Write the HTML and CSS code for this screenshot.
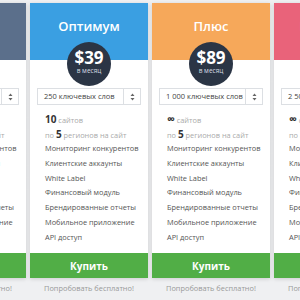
FILE: index.html
```html
<!DOCTYPE html>
<html lang="ru">
<head>
<meta charset="UTF-8">
<title>Тарифы</title>
<link rel="stylesheet" href="styles.css">
</head>
<body>
<div class="plans">
    <div class="plan">
        <div class="card gray">
            <div class="title">Базовый</div>
            <div class="price"><b>$19</b><span>в месяц</span></div>
            <div class="select"><span class="value">100 ключевых слов</span><span class="arrows"><svg width="5" height="8" viewBox="0 0 5 8"><path d="M2.5 0.5L4.5 3H0.5zM2.5 7.5L4.5 5H0.5z" fill="#666"/></svg></span></div>
            <ul class="features">
                <li><b>3</b> сайта</li>
                <li>по <b>5</b> регионов на сайт</li>
                <li class="on">Мониторинг конкурентов</li>
                <li class="on">Клиентские аккаунты</li>
                <li class="on">White Label</li>
                <li class="on">Финансовый модуль</li>
                <li class="on">Брендированные отчеты</li>
                <li class="on">Мобильное приложение</li>
                <li class="on">API доступ</li>
            </ul>
            <button class="buy">Купить</button>
        </div>
        <div class="trial">Попробовать бесплатно!</div>
    </div>

    <div class="plan">
        <div class="card blue">
            <div class="title">Оптимум</div>
            <div class="price"><b>$39</b><span>в месяц</span></div>
            <div class="select"><span class="value">250 ключевых слов</span><span class="arrows"><svg width="5" height="8" viewBox="0 0 5 8"><path d="M2.5 0.5L4.5 3H0.5zM2.5 7.5L4.5 5H0.5z" fill="#666"/></svg></span></div>
            <ul class="features">
                <li><b>10</b> сайтов</li>
                <li>по <b>5</b> регионов на сайт</li>
                <li class="on">Мониторинг конкурентов</li>
                <li class="on">Клиентские аккаунты</li>
                <li class="on">White Label</li>
                <li class="on">Финансовый модуль</li>
                <li class="on">Брендированные отчеты</li>
                <li class="on">Мобильное приложение</li>
                <li class="on">API доступ</li>
            </ul>
            <button class="buy">Купить</button>
        </div>
        <div class="trial">Попробовать бесплатно!</div>
    </div>

    <div class="plan">
        <div class="card orange">
            <div class="title">Плюс</div>
            <div class="price"><b>$89</b><span>в месяц</span></div>
            <div class="select"><span class="value">1 000 ключевых слов</span><span class="arrows"><svg width="5" height="8" viewBox="0 0 5 8"><path d="M2.5 0.5L4.5 3H0.5zM2.5 7.5L4.5 5H0.5z" fill="#666"/></svg></span></div>
            <ul class="features">
                <li><b class="inf">∞</b> сайтов</li>
                <li>по <b>5</b> регионов на сайт</li>
                <li class="on">Мониторинг конкурентов</li>
                <li class="on">Клиентские аккаунты</li>
                <li class="on">White Label</li>
                <li class="on">Финансовый модуль</li>
                <li class="on">Брендированные отчеты</li>
                <li class="on">Мобильное приложение</li>
                <li class="on">API доступ</li>
            </ul>
            <button class="buy">Купить</button>
        </div>
        <div class="trial">Попробовать бесплатно!</div>
    </div>

    <div class="plan">
        <div class="card pink">
            <div class="title">Компания</div>
            <div class="price"><b>$179</b><span>в месяц</span></div>
            <div class="select"><span class="value">2 500 ключевых слов</span><span class="arrows"><svg width="5" height="8" viewBox="0 0 5 8"><path d="M2.5 0.5L4.5 3H0.5zM2.5 7.5L4.5 5H0.5z" fill="#666"/></svg></span></div>
            <ul class="features">
                <li><b class="inf">∞</b> сайтов</li>
                <li>по <b>5</b> регионов на сайт</li>
                <li class="on">Мониторинг конкурентов</li>
                <li class="on">Клиентские аккаунты</li>
                <li class="on">White Label</li>
                <li class="on">Финансовый модуль</li>
                <li class="on">Брендированные отчеты</li>
                <li class="on">Мобильное приложение</li>
                <li class="on">API доступ</li>
            </ul>
            <button class="buy">Купить</button>
        </div>
        <div class="trial">Попробовать бесплатно!</div>
    </div>
</div>
</body>
</html>
```

FILE: styles.css
```css
body {
    margin: 0;
    width: 300px;
    height: 300px;
    overflow: hidden;
    font-family: "Open Sans", "Noto Sans", sans-serif;
    background:
        repeating-linear-gradient(90deg, rgba(255,255,255,0.035) 0 1px, transparent 1px 12px),
        repeating-linear-gradient(0deg, rgba(255,255,255,0.035) 0 1px, transparent 1px 12px),
        #252d3b;
    background-size: 100% 190px;
    background-repeat: no-repeat;
    background-color: #eff0f2;
}
.plans {
    display: flex;
    gap: 4px;
    margin-left: -92px;
    padding-top: 3px;
}
.plan {
    flex: 0 0 118px;
    display: flex;
    flex-direction: column;
}
.card {
    display: flex;
    flex-direction: column;
    background: #fff;
    box-shadow: 0 1px 4px rgba(0,0,0,0.15);
}
.card.gray   { background: linear-gradient(#5b6f8b 0 57px, #fff 57px); }
.card.blue   { background: linear-gradient(#3a9fe2 0 57px, #fff 57px); }
.card.orange { background: linear-gradient(#f6a85a 0 57px, #fff 57px); }
.card.pink   { background: linear-gradient(#e9637a 0 57px, #fff 57px); }
.title {
    margin-top: 15px;
    height: 16px;
    line-height: 16px;
    text-align: center;
    color: #fff;
    font-size: 13px;
    font-weight: 600;
}
.price {
    width: 44px;
    height: 44px;
    margin: 8px auto 0;
    border-radius: 50%;
    background: #2b3545;
    color: #fff;
    display: flex;
    flex-direction: column;
    align-items: center;
}
.price b {
    margin-top: 7px;
    font-size: 17px;
    line-height: 17px;
    font-weight: 700;
}
.price span {
    margin-top: 1px;
    font-size: 6.5px;
    line-height: 8px;
    color: #d5dae2;
}
.select {
    margin: 2px 7px 0;
    height: 17px;
    border: 1px solid #dcdfe3;
    box-sizing: border-box;
    display: flex;
    font-size: 7.5px;
    color: #444;
}
.select .value {
    flex: 1;
    padding-left: 6px;
    line-height: 15px;
}
.select .arrows {
    width: 16px;
    border-left: 1px solid #dcdfe3;
    display: flex;
    align-items: center;
    justify-content: center;
}
.features {
    list-style: none;
    margin: 7px 0 0;
    padding: 0 0 0 15px;
    font-size: 7.4px;
    line-height: 14.7px;
    color: #aaa;
}
.features li {
    height: 14.7px;
    white-space: nowrap;
}
.features b {
    color: #333;
    font-size: 10px;
    font-weight: 700;
}
.features b.inf {
    font-size: 11px;
}
.features li.on {
    color: #555;
}
.buy {
    margin-top: 9px;
    height: 25px;
    border: none;
    background: #51ae46;
    color: #fff;
    font-family: inherit;
    font-size: 10px;
    font-weight: 700;
    cursor: pointer;
}
.trial {
    text-align: center;
    font-size: 7.4px;
    line-height: 20px;
    color: #999;
}
```
